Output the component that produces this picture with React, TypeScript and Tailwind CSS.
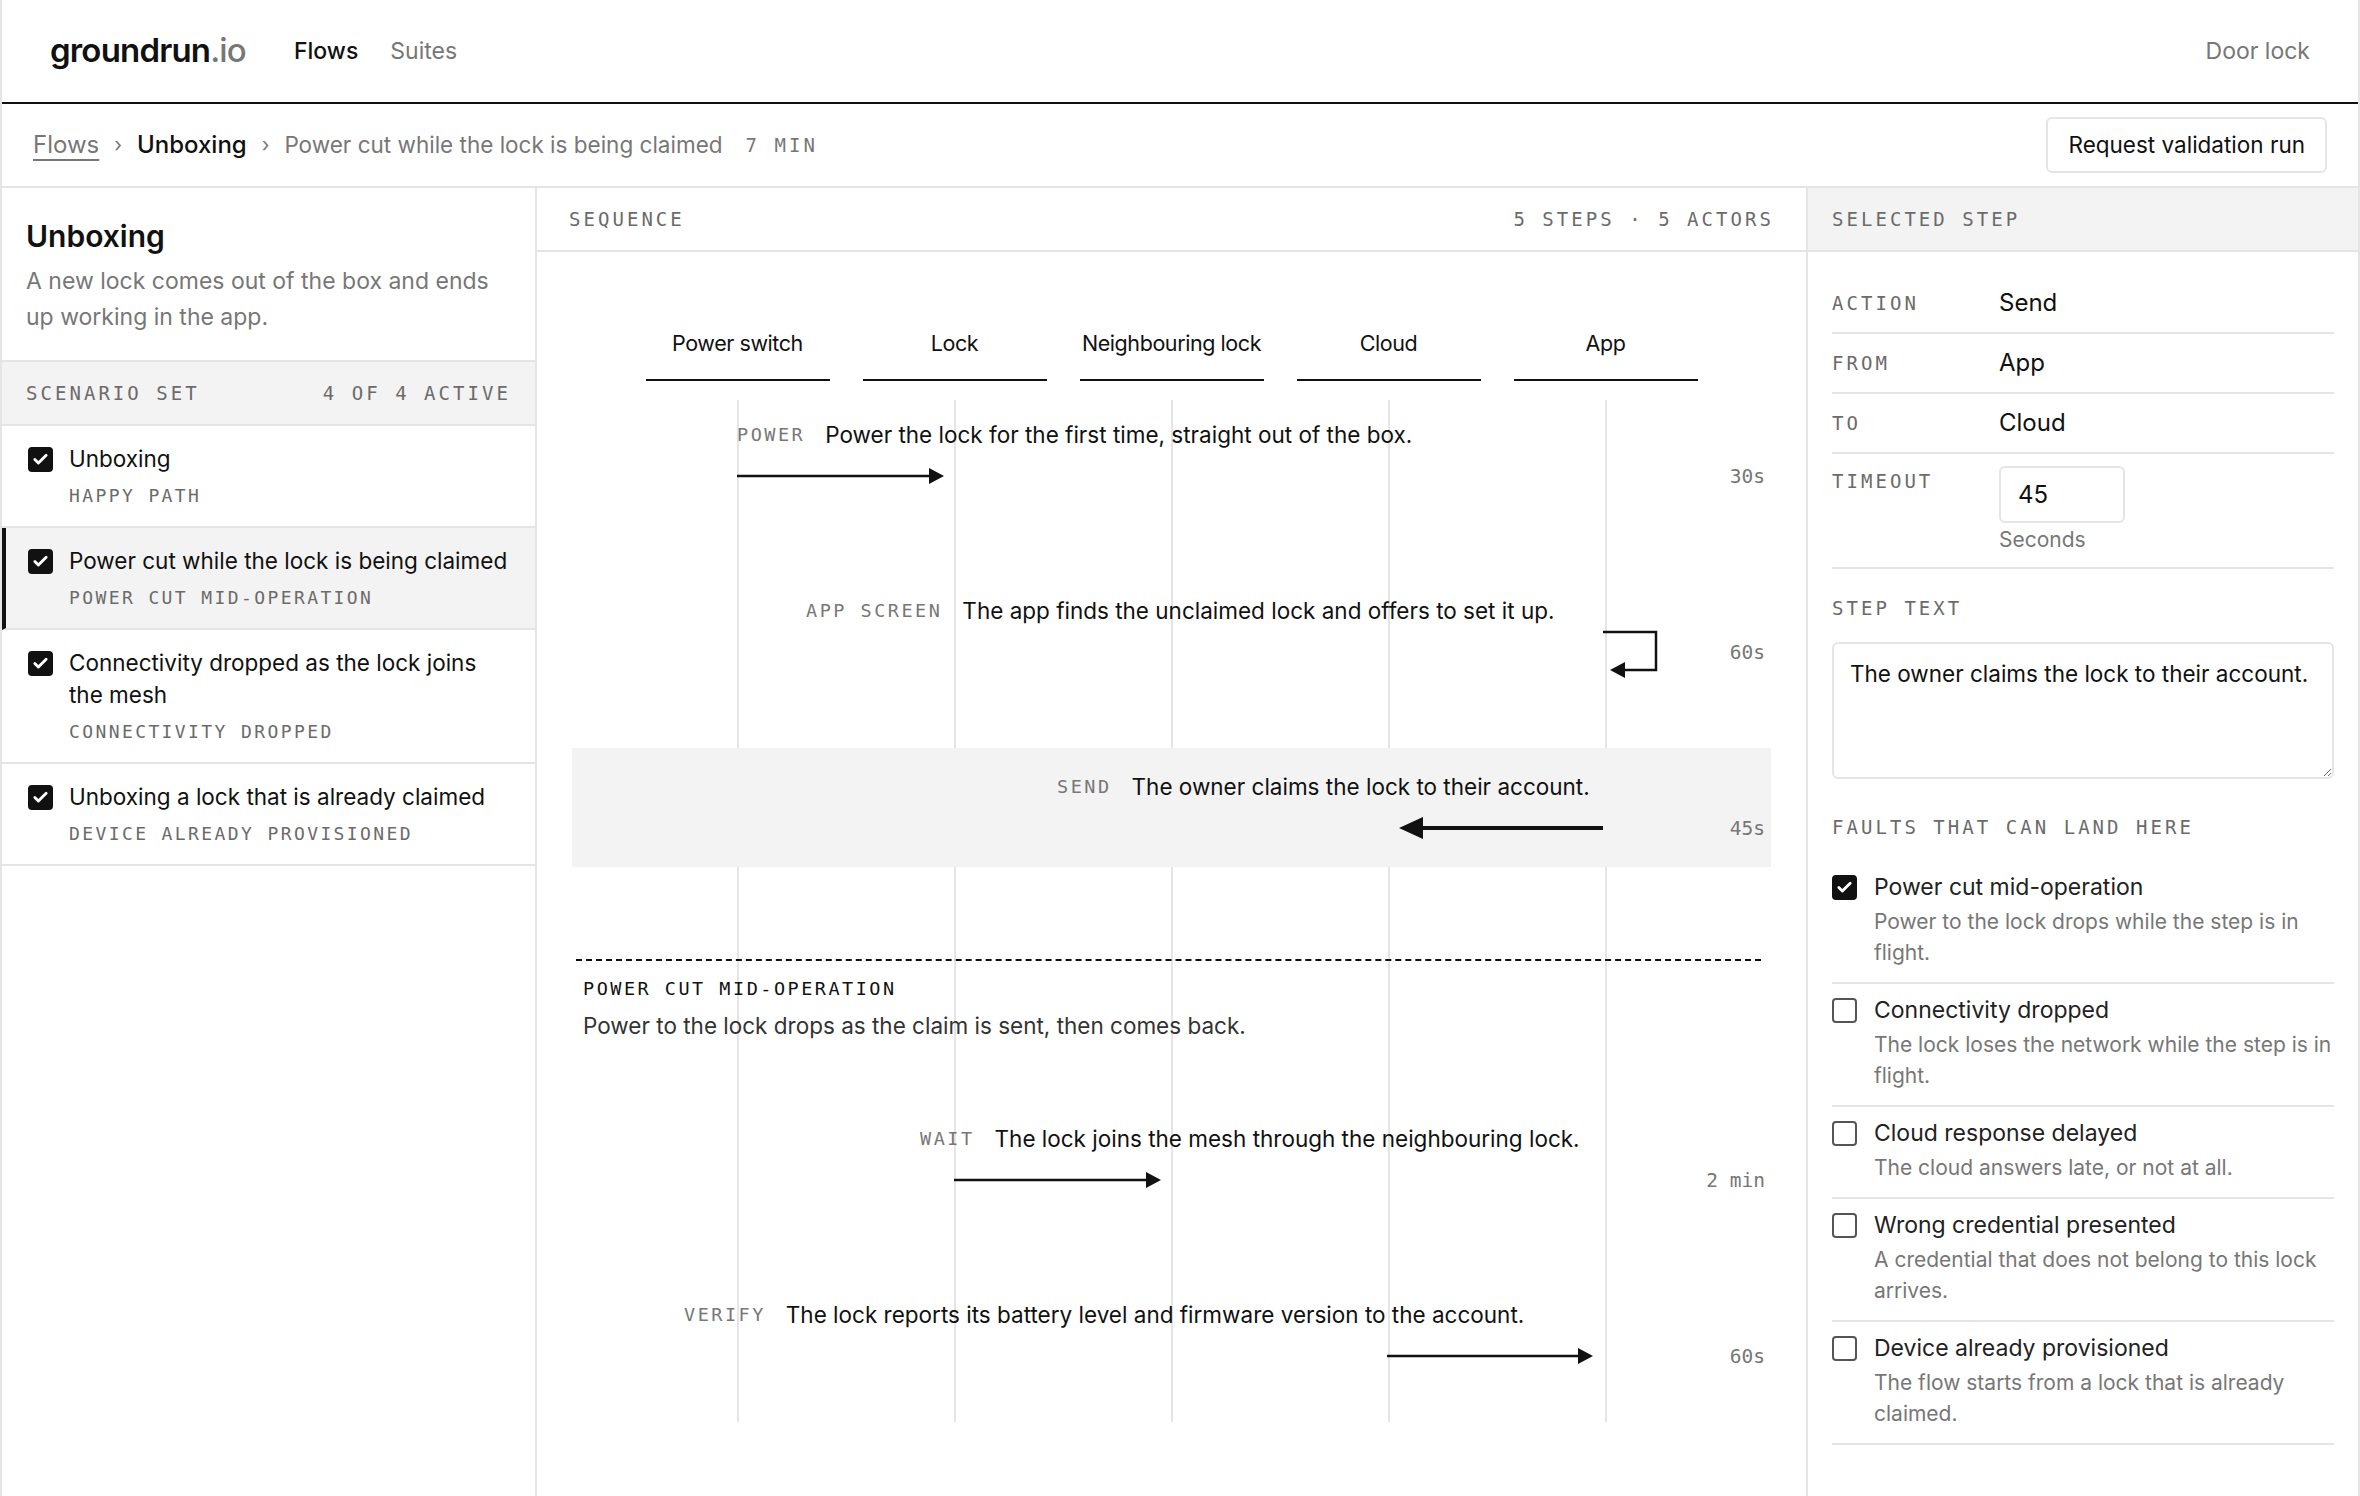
import React from 'react';
import { Check } from 'lucide-react';

const mono = "font-['DejaVu_Sans_Mono',monospace]";

const actors = ['Power switch', 'Lock', 'Neighbouring lock', 'Cloud', 'App'];
// lifeline x inside a step row (row starts 35px into the column)
const lanes = [165, 382, 599, 815, 1031];

type Step = {
  tag: string;
  text: string;
  dur: string;
  pl: string;
  from: number;
  to: number;
  selected?: boolean;
};

const steps: Step[] = [
  { tag: 'POWER', text: 'Power the lock for the first time, straight out of the box.', dur: '30s', pl: 'pl-[165px]', from: 0, to: 1 },
  { tag: 'APP SCREEN', text: 'The app finds the unclaimed lock and offers to set it up.', dur: '60s', pl: 'pl-[234px]', from: 4, to: 4 },
  { tag: 'SEND', text: 'The owner claims the lock to their account.', dur: '45s', pl: 'pl-[485px]', from: 4, to: 3, selected: true },
  { tag: 'WAIT', text: 'The lock joins the mesh through the neighbouring lock.', dur: '2 min', pl: 'pl-[348px]', from: 1, to: 2 },
  { tag: 'VERIFY', text: 'The lock reports its battery level and firmware version to the account.', dur: '60s', pl: 'pl-[112px]', from: 3, to: 4 },
];

const scenarios = [
  { title: 'Unboxing', sub: 'HAPPY PATH' },
  { title: 'Power cut while the lock is being claimed', sub: 'POWER CUT MID-OPERATION', active: true },
  { title: 'Connectivity dropped as the lock joins the mesh', sub: 'CONNECTIVITY DROPPED' },
  { title: 'Unboxing a lock that is already claimed', sub: 'DEVICE ALREADY PROVISIONED' },
];

const faults = [
  { title: 'Power cut mid-operation', desc: 'Power to the lock drops while the step is in flight.', on: true },
  { title: 'Connectivity dropped', desc: 'The lock loses the network while the step is in flight.' },
  { title: 'Cloud response delayed', desc: 'The cloud answers late, or not at all.' },
  { title: 'Wrong credential presented', desc: 'A credential that does not belong to this lock arrives.' },
  { title: 'Device already provisioned', desc: 'The flow starts from a lock that is already claimed.' },
];

const Box = ({ on }: { on?: boolean }) =>
  on ? (
    <span className="mt-[4px] flex h-[25px] w-[25px] shrink-0 items-center justify-center rounded-[4px] bg-[#111]">
      <Check size={17} strokeWidth={4} className="text-white" />
    </span>
  ) : (
    <span className="mt-[4px] h-[25px] w-[25px] shrink-0 rounded-[4px] border-2 border-[#555] bg-white" />
  );

const Arrow = ({ from, to, bold }: { from: number; to: number; bold?: boolean }) => {
  const y = 80;
  if (from === to) {
    const x = lanes[from];
    return (
      <g>
        <path d={`M${x} 60 H${x + 53} V98 H${x + 20}`} fill="none" stroke="#111" strokeWidth={2.5} />
        <polygon points={`${x + 7},98 ${x + 22},90 ${x + 22},106`} fill="#111" />
      </g>
    );
  }
  const x1 = lanes[from];
  const dir = lanes[to] > x1 ? 1 : -1;
  const tip = lanes[to] - dir * (bold ? 12 : 10);
  const head = bold ? 24 : 15;
  const hh = bold ? 11 : 8;
  const base = tip - dir * head;
  return (
    <g>
      <line x1={x1} y1={y} x2={base + dir * 2} y2={y} stroke="#111" strokeWidth={bold ? 4 : 2.5} />
      <polygon points={`${tip},${y} ${base},${y - hh} ${base},${y + hh}`} fill="#111" />
    </g>
  );
};

const StepRow = ({ s, className }: { s: Step; className: string }) => (
  <div className={`relative mx-[35px] h-[119px] ${s.selected ? 'bg-[#f3f3f3]' : ''} ${className}`}>
    <svg className="pointer-events-none absolute inset-0 h-full w-full overflow-visible">
      <Arrow from={s.from} to={s.to} bold={s.selected} />
    </svg>
    <div className={`flex items-center gap-[20px] pt-[21px] leading-[36px] ${s.pl}`}>
      <span className={`${mono} text-[18.5px] tracking-[0.135em] text-[#777]`}>{s.tag}</span>
      <span className="text-[22.5px] text-[#111]">{s.text}</span>
    </div>
    <div className={`mt-[10px] flex justify-end pr-[6px] leading-[28px] ${mono} text-[19.5px] text-[#777]`}>{s.dur}</div>
  </div>
);

export default function App() {
  return (
    <div className="flex h-screen flex-col overflow-hidden border-x-2 border-[#e5e5e5] bg-white font-['Inter',sans-serif] text-[#111]">
      {/* top nav */}
      <header className="flex h-[104px] shrink-0 items-center border-b-2 border-[#111] px-12">
        <div className="text-[33px] font-semibold tracking-tight">
          groundrun<span className="font-medium text-[#777]">.io</span>
        </div>
        <nav className="ml-12 flex items-center gap-8 text-[23px]">
          <span className="font-medium text-[#111]">Flows</span>
          <span className="text-[#777]">Suites</span>
        </nav>
        <div className="ml-auto text-[23px] text-[#777]">Door lock</div>
      </header>

      {/* breadcrumb */}
      <div className="flex h-[84px] shrink-0 items-center justify-between border-b-2 border-[#e5e5e5] px-[31px]">
        <div className="flex items-center gap-[15px] text-[24px]">
          <span className="text-[#777] underline decoration-[#777] decoration-2 underline-offset-[6px]">Flows</span>
          <span className="text-[20px] text-[#777]">›</span>
          <span className="font-medium">Unboxing</span>
          <span className="text-[20px] text-[#777]">›</span>
          <span className="text-[22.5px] text-[#777]">Power cut while the lock is being claimed</span>
          <span className={`${mono} ml-[8px] text-[19px] tracking-[0.16em] text-[#777]`}>7 MIN</span>
        </div>
        <button className="h-[56px] rounded-[6px] border-2 border-[#e5e5e5] bg-white px-[20px] text-[22.5px] text-[#111]">
          Request validation run
        </button>
      </div>

      <div className="grid min-h-0 flex-1 grid-cols-[535px_1fr_552px]">
        {/* left sidebar */}
        <aside className="flex flex-col border-r-2 border-[#e5e5e5]">
          <div className="border-b-2 border-[#e5e5e5] px-6 pb-[25px] pt-[30px]">
            <h1 className="text-[30px] font-semibold leading-[36px]">Unboxing</h1>
            <p className="mt-[9px] text-[23px] leading-[36px] text-[#777]">
              A new lock comes out of the box and ends up working in the app.
            </p>
          </div>
          <div className={`flex h-[64px] items-center justify-between border-b-2 border-[#e5e5e5] bg-[#f3f3f3] px-6 ${mono} text-[19px] tracking-[0.16em] text-[#6b6b6b]`}>
            <span>SCENARIO SET</span>
            <span>4 OF 4 ACTIVE</span>
          </div>
          {scenarios.map((s) => (
            <div
              key={s.sub}
              className={`flex gap-[16px] border-b-2 border-[#e5e5e5] pb-[18px] pr-6 pt-[17px] ${
                s.active ? 'border-l-4 border-l-[#111] bg-[#f3f3f3] pl-[22px]' : 'pl-[26px]'
              }`}
            >
              <Box on />
              <div>
                <div className="text-[22.5px] leading-[32px]">{s.title}</div>
                <div className={`${mono} mt-[9px] text-[18px] leading-[24px] tracking-[0.133em] text-[#6b6b6b]`}>{s.sub}</div>
              </div>
            </div>
          ))}
        </aside>

        {/* sequence */}
        <main className="flex min-w-0 flex-col">
          <div className={`flex h-[64px] shrink-0 items-center justify-between border-b-2 border-[#e5e5e5] px-8 ${mono} text-[19px] tracking-[0.16em] text-[#6b6b6b]`}>
            <span>SEQUENCE</span>
            <span>5 STEPS · 5 ACTORS</span>
          </div>
          <div className="pt-[73px]">
            <div className="mx-auto grid w-[1052px] grid-cols-5 gap-[33px]">
              {actors.map((a) => (
                <div key={a} className="whitespace-nowrap border-b-2 border-[#111] pb-[18px] text-center text-[21.5px] leading-[36px] tracking-[-0.02em]">
                  {a}
                </div>
              ))}
            </div>
            <div className="relative pb-[27px] pt-[15px]">
              <div className="pointer-events-none absolute bottom-0 left-1/2 top-[19px] grid w-[1052px] -translate-x-1/2 grid-cols-5 gap-[33px]">
                {actors.map((a) => (
                  <div key={a} className="flex justify-center">
                    <div className="w-[2px] bg-[#e5e5e5]" />
                  </div>
                ))}
              </div>
              <StepRow s={steps[0]} className="" />
              <StepRow s={steps[1]} className="mt-[57px]" />
              <StepRow s={steps[2]} className="mt-[57px]" />
              <div className="relative ml-[39px] mr-[45px] mt-[92px] border-t-2 border-dashed border-[#111] pl-[7px] pt-[16px]">
                <div className={`${mono} text-[18.5px] leading-[24px] tracking-[0.135em] text-[#111]`}>POWER CUT MID-OPERATION</div>
                <div className="mt-[7px] text-[22.5px] leading-[36px] text-[#333]">
                  Power to the lock drops as the claim is sent, then comes back.
                </div>
              </div>
              <StepRow s={steps[3]} className="mt-[56px]" />
              <StepRow s={steps[4]} className="mt-[57px]" />
            </div>
          </div>
        </main>

        {/* selected step */}
        <aside className="flex min-w-0 flex-col border-l-2 border-[#e5e5e5]">
          <div className={`flex h-[64px] shrink-0 items-center border-b-2 border-[#e5e5e5] bg-[#f3f3f3] px-6 ${mono} text-[19px] tracking-[0.16em] text-[#6b6b6b]`}>
            SELECTED STEP
          </div>
          <div className="px-6 pt-[22px]">
            {[
              ['ACTION', 'Send'],
              ['FROM', 'App'],
              ['TO', 'Cloud'],
            ].map(([k, v]) => (
              <div key={k} className="flex items-center border-b-2 border-[#e5e5e5] py-[11px] leading-[36px]">
                <span className={`${mono} w-[167px] text-[19px] tracking-[0.16em] text-[#6b6b6b]`}>{k}</span>
                <span className="text-[24px]">{v}</span>
              </div>
            ))}
            <div className="flex border-b-2 border-[#e5e5e5] pb-[12px] pt-[12px]">
              <span className={`${mono} w-[167px] text-[19px] leading-[30px] tracking-[0.16em] text-[#6b6b6b]`}>TIMEOUT</span>
              <div>
                <div className="flex h-[57px] w-[126px] items-center rounded-[6px] border-2 border-[#e5e5e5] px-[17px] text-[24px]">45</div>
                <div className="mt-[2px] text-[21px] leading-[30px] text-[#777]">Seconds</div>
              </div>
            </div>
            <div className={`${mono} mt-[27px] text-[19px] leading-[24px] tracking-[0.16em] text-[#6b6b6b]`}>STEP TEXT</div>
            <textarea
              readOnly
              defaultValue="The owner claims the lock to their account."
              className="mt-[22px] block h-[137px] w-full rounded-[6px] border-2 border-[#e5e5e5] px-[16px] py-[12px] text-[22.5px] leading-[36px] text-[#111] outline-none"
            />
            <div className={`${mono} mt-[36px] text-[19px] leading-[24px] tracking-[0.16em] text-[#6b6b6b]`}>FAULTS THAT CAN LAND HERE</div>
            <div className="mt-[22px]">
              {faults.map((f) => (
                <div key={f.title} className="flex gap-[17px] border-b-2 border-[#e5e5e5] pb-[14px] pt-[10px]">
                  <Box on={f.on} />
                  <div className="min-w-0">
                    <div className="text-[23px] leading-[32px] text-[#222]">{f.title}</div>
                    <div className="mt-[3px] text-[21px] leading-[31px] text-[#777]">{f.desc}</div>
                  </div>
                </div>
              ))}
            </div>
          </div>
        </aside>
      </div>
    </div>
  );
}
